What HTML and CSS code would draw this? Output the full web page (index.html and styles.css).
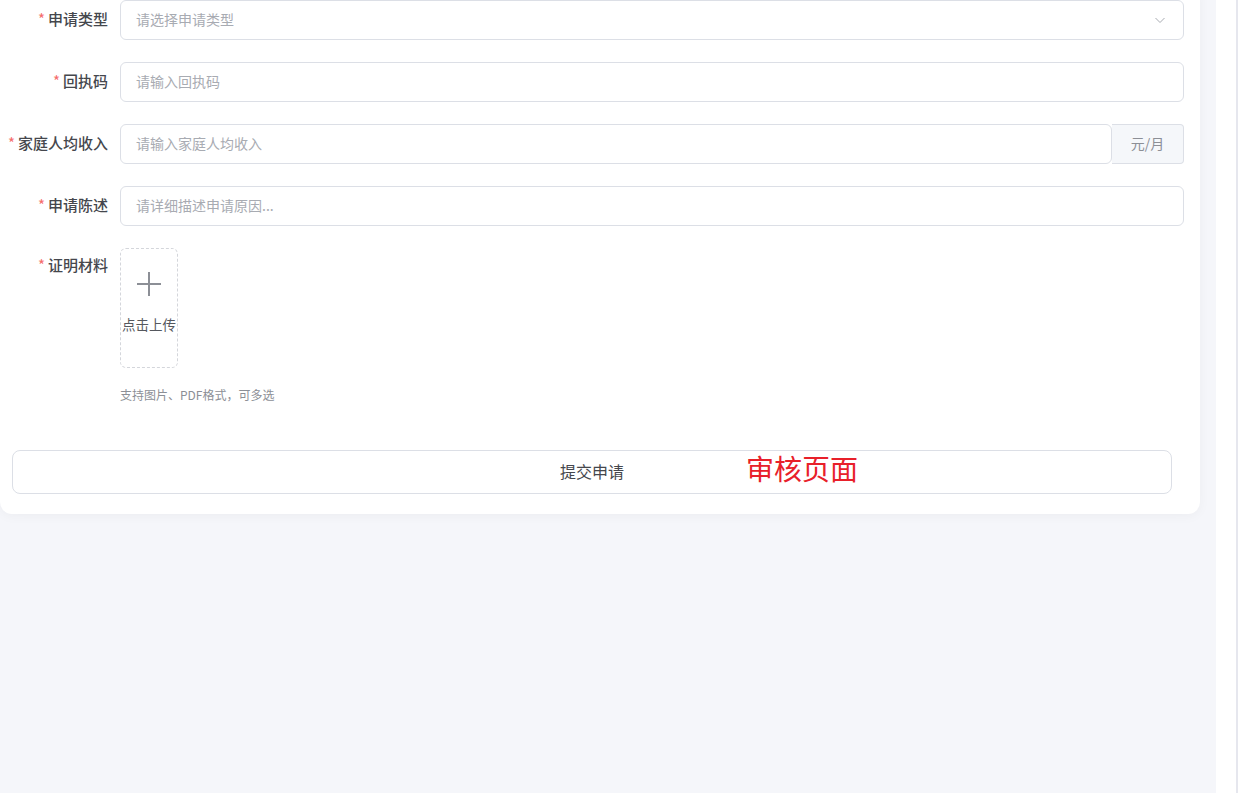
FILE: index.html
```html
<!DOCTYPE html>
<html lang="zh-CN">
<head>
  <meta charset="UTF-8">
  <meta name="viewport" content="width=device-width, initial-scale=1.0">
  <title>审核页面</title>
  <link rel="stylesheet" href="styles.css">
</head>
<body>
  <div class="layout">
    <div class="main">
      <div class="card">
        <form class="apply-form">
          <div class="form-item">
            <label class="form-label"><span class="req">*</span>申请类型</label>
            <div class="form-control select">
              <span class="placeholder">请选择申请类型</span>
              <svg class="arrow" width="12" height="12" viewBox="0 0 12 12"><path d="M1.5 4 L6 8.5 L10.5 4" fill="none" stroke="#a8abb2" stroke-width="1"/></svg>
            </div>
          </div>
          <div class="form-item">
            <label class="form-label"><span class="req">*</span>回执码</label>
            <div class="form-control"><span class="placeholder">请输入回执码</span></div>
          </div>
          <div class="form-item">
            <label class="form-label"><span class="req">*</span>家庭人均收入</label>
            <div class="input-group">
              <div class="form-control grouped"><span class="placeholder">请输入家庭人均收入</span></div>
              <div class="append">元/月</div>
            </div>
          </div>
          <div class="form-item">
            <label class="form-label"><span class="req">*</span>申请陈述</label>
            <div class="form-control"><span class="placeholder">请详细描述申请原因...</span></div>
          </div>
          <div class="form-item upload-item">
            <label class="form-label"><span class="req">*</span>证明材料</label>
            <div class="upload-wrap">
              <div class="upload-box">
                <svg width="26" height="26" viewBox="0 0 26 26"><path d="M13 1 V25 M1 13 H25" stroke="#8c8f96" stroke-width="2"/></svg>
                <span class="upload-text">点击上传</span>
              </div>
              <div class="hint">支持图片、PDF格式，可多选</div>
            </div>
          </div>
          <div class="submit-row">
            <button type="button" class="submit-btn">提交申请</button>
            <span class="stamp">审核页面</span>
          </div>
        </form>
      </div>
    </div>
    <div class="side"></div>
  </div>
</body>
</html>
```

FILE: styles.css
```css
html, body {
  margin: 0;
  height: 100%;
}
body {
  font-family: "Noto Sans CJK SC", "Noto Sans", sans-serif;
  background-color: #fff;
  overflow: hidden;
}
.layout {
  display: flex;
  height: 793px;
}
.main {
  width: 1216px;
  background-color: #f5f6fa;
}
.side {
  width: 20px;
  background-color: #fff;
  border-right: 2px solid #e6e7ee;
}
.card {
  width: 1200px;
  margin-top: -20px;
  padding: 20px 0 20px;
  box-sizing: border-box;
  background-color: #fff;
  border-radius: 12px;
  box-shadow: 0 2px 12px rgba(0, 0, 0, 0.04);
}
.form-item {
  display: flex;
  align-items: center;
  margin-bottom: 22px;
  padding-right: 16px;
}
.form-label {
  width: 108px;
  padding-right: 12px;
  padding-bottom: 3px;
  text-align: right;
  font-size: 15px;
  font-weight: 500;
  color: #45474d;
  flex-shrink: 0;
}
.req {
  color: #f56c6c;
  margin-right: 3px;
  font-weight: normal;
}
.form-control {
  flex: 1;
  height: 40px;
  box-sizing: border-box;
  border: 1px solid #dcdfe6;
  border-radius: 6px;
  padding: 0 15px 2px;
  display: flex;
  align-items: center;
  justify-content: space-between;
}
.placeholder {
  font-size: 14px;
  color: #a8abb2;
}
.arrow {
  margin-right: 2px;
  margin-top: 2px;
}
.input-group {
  flex: 1;
  display: flex;
}
.append {
  width: 72px;
  height: 40px;
  box-sizing: border-box;
  border: 1px solid #dcdfe6;
  border-left: none;
  border-radius: 0 4px 4px 0;
  background-color: #f5f7fa;
  color: #8c8f96;
  font-size: 14px;
  padding-bottom: 2px;
  display: flex;
  align-items: center;
  justify-content: center;
}
.upload-item {
  align-items: flex-start;
  margin-bottom: 0;
}
.upload-item .form-label {
  line-height: 40px;
  margin-top: -3px;
  padding-bottom: 0;
}
.upload-box {
  width: 58px;
  height: 120px;
  box-sizing: border-box;
  border: 1px dashed #d4d6db;
  border-radius: 6px;
  display: flex;
  flex-direction: column;
  align-items: center;
  padding-top: 22px;
}
.upload-text {
  margin-top: 17px;
  font-size: 13.5px;
  color: #55585e;
  white-space: nowrap;
}
.hint {
  margin-top: 18px;
  font-size: 12px;
  color: #8c8f96;
}
.submit-row {
  position: relative;
  margin: 47px 28px 0 12px;
}
.submit-btn {
  width: 100%;
  height: 44px;
  border: 1px solid #dcdfe6;
  border-radius: 8px;
  background-color: #fff;
  font-family: inherit;
  font-size: 16px;
  color: #45474d;
  padding-bottom: 4px;
  cursor: pointer;
}
.stamp {
  position: absolute;
  left: 734px;
  top: -2px;
  font-size: 28px;
  color: #e8202a;
  pointer-events: none;
}
```
